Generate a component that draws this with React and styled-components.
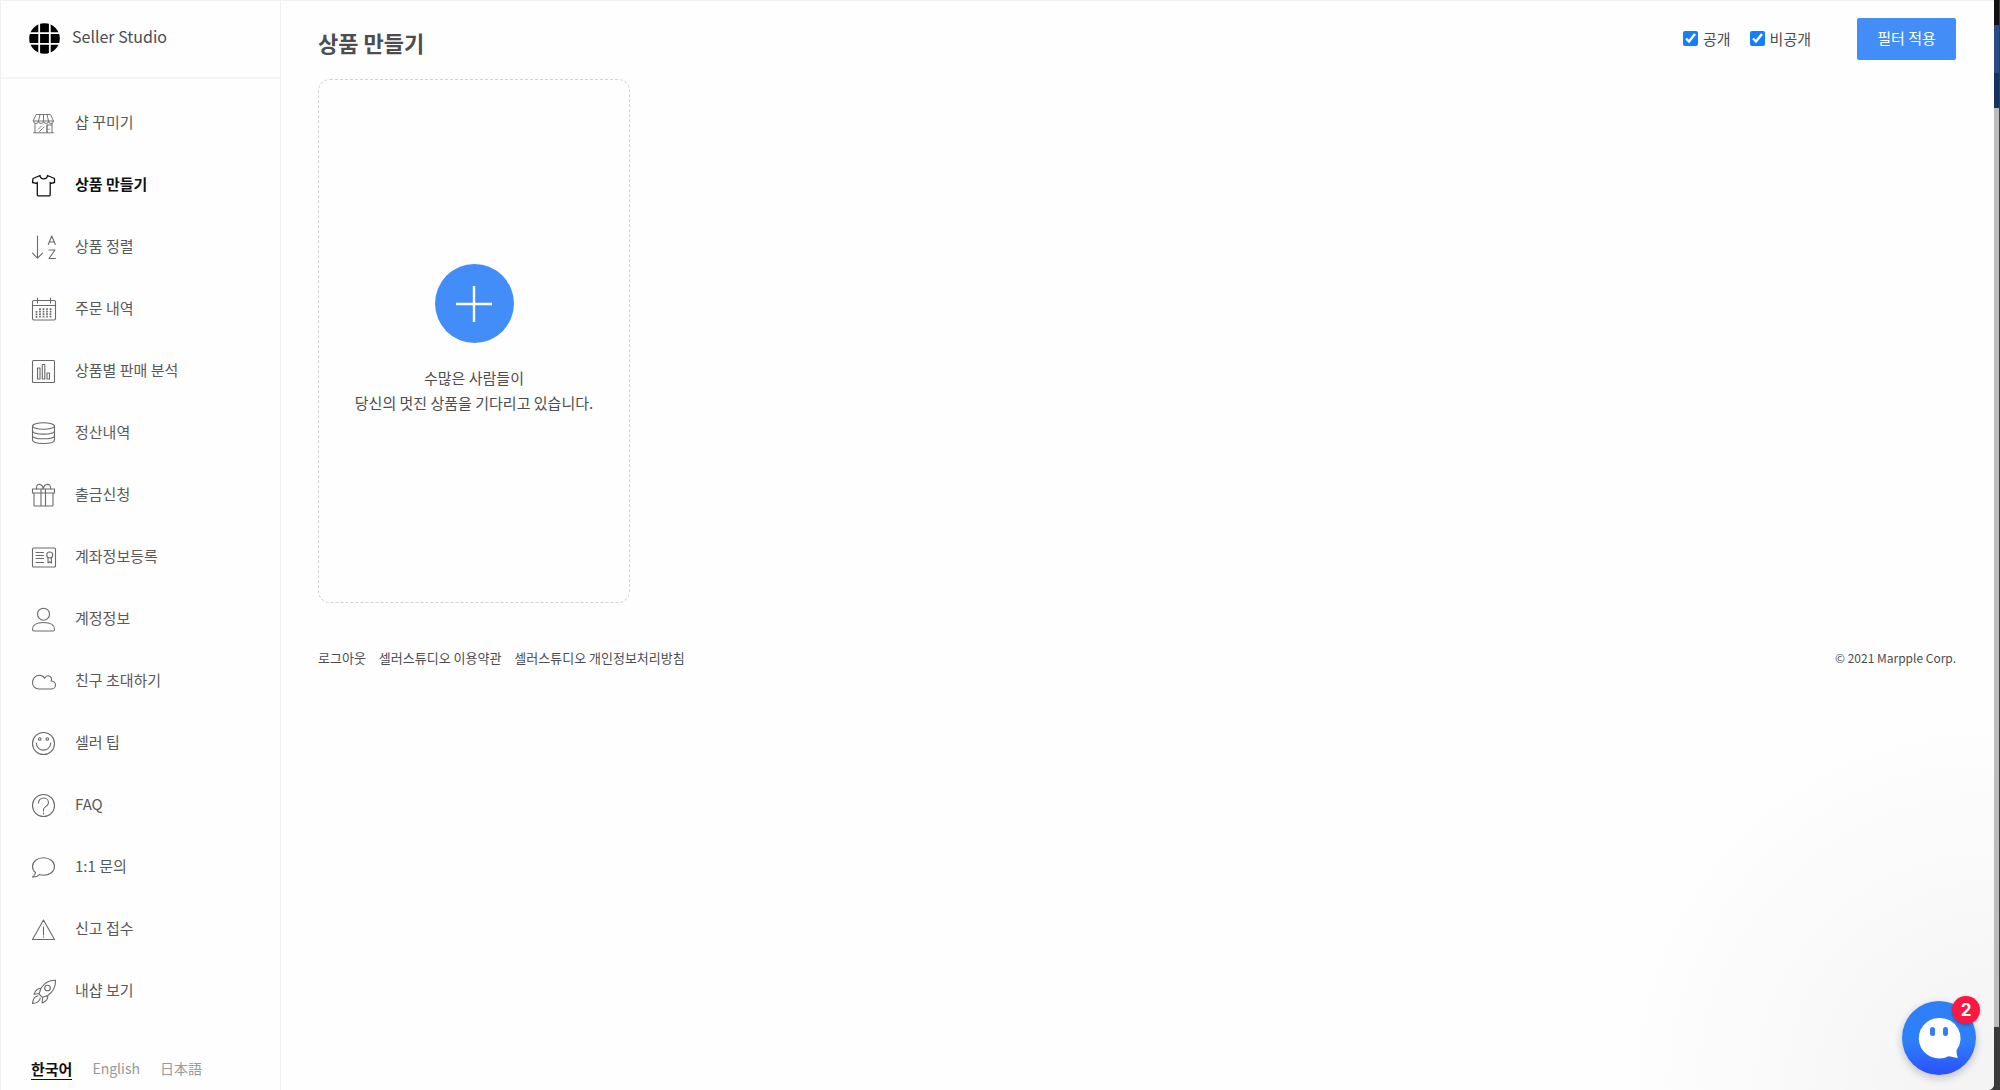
import React from 'react';
import styled, { createGlobalStyle, css } from 'styled-components';

const GlobalStyle = createGlobalStyle`
  * {
    box-sizing: border-box;
  }
  body {
    margin: 0;
    color: #4b4d52;
    background: #fff;
    font-family: 'Noto Sans CJK KR', 'Noto Sans CJK JP', sans-serif;
    font-size: 15px;
    line-height: 21px;
  }
  a {
    color: inherit;
    text-decoration: none;
  }
`;

const Desktop = styled.div`
  display: flex;
  min-height: 100vh;
  background: #3a3a3a;
`;

const Window = styled.div`
  position: relative;
  display: flex;
  flex: 1;
  background: #fefefe;
  border-top: 1px solid #f0f0f0;
  border-left: 1px solid #f0f0f0;
  border-bottom-right-radius: 6px;
`;

const Edge = styled.div`
  display: flex;
  flex-direction: column;
  width: 6px;
  border-right: 1px solid #3c3c3c;
`;

const EdgeBlock = styled.div`
  flex: ${props => props.$size} 0 0;
  background: ${props => props.$color};
`;

const Sidebar = styled.nav`
  display: flex;
  flex-direction: column;
  width: 280px;
  border-right: 1px solid #f0f0f0;
`;

const Brand = styled.a`
  display: flex;
  align-items: center;
  gap: 12px;
  height: 78px;
  padding: 0 28px 2px;
  border-bottom: 2px solid #f5f5f5;
  font-size: 16px;

  span {
    padding-bottom: 4px;
  }
`;

const Menu = styled.ul`
  list-style: none;
  margin: 0;
  padding: 13px 0 0;
`;

const MenuLink = styled.a`
  display: flex;
  align-items: center;
  gap: 19px;
  height: 62px;
  padding-left: 30px;
  color: #58595b;

  svg {
    width: 25px;
    height: 25px;
    fill: none;
    stroke: #6a6a6a;
    stroke-width: 1.1;
    stroke-linejoin: round;
    stroke-linecap: round;
  }

  span {
    padding-bottom: 3px;
  }

  ${props =>
    props.$active &&
    css`
      color: #111;
      font-weight: 700;

      svg {
        stroke: #111;
        stroke-width: 1.3;
      }
    `}
`;

const Languages = styled.div`
  display: flex;
  gap: 20px;
  padding: 36px 0 10px 30px;
`;

const Language = styled.a`
  color: #999;
  font-size: 14px;

  ${props =>
    props.$active &&
    css`
      color: #111;
      font-size: 15px;
      font-weight: 700;
      border-bottom: 1px solid #111;
    `}
`;

const Main = styled.main`
  flex: 1;
  padding: 17px 38px 0 37px;
`;

const Header = styled.header`
  display: flex;
  align-items: flex-start;
  justify-content: space-between;
`;

const Title = styled.h1`
  margin: 0;
  padding-top: 8px;
  font-size: 22px;
  line-height: 32px;
  font-weight: 700;
`;

const Filter = styled.form`
  display: flex;
  align-items: center;
`;

const Check = styled.label`
  display: flex;
  align-items: center;
  gap: 5px;
  margin-right: 19px;
  padding-bottom: 2px;

  input {
    width: 15px;
    height: 15px;
    margin: 0;
    accent-color: #157efb;
  }
`;

const Apply = styled.button`
  width: 99px;
  height: 42px;
  margin-left: 27px;
  padding: 0 0 4px;
  border: 0;
  border-radius: 2px;
  background: #438df8;
  color: #fff;
  font: inherit;
`;

const Card = styled.section`
  display: flex;
  flex-direction: column;
  align-items: center;
  justify-content: center;
  width: 312px;
  height: 524px;
  margin-top: 19px;
  padding-bottom: 3px;
  border: 1px dashed #d2d2d2;
  border-radius: 12px;
`;

const AddButton = styled.button`
  width: 79px;
  height: 79px;
  padding: 0;
  border: 0;
  border-radius: 50%;
  background: #438df8;

  svg {
    display: block;
    margin: auto;
  }
`;

const CardText = styled.p`
  margin: 22px 0 0;
  line-height: 25px;
  text-align: center;
`;

const Footer = styled.footer`
  display: flex;
  justify-content: space-between;
  padding-top: 44px;
  font-size: 13px;
`;

const FooterLinks = styled.div`
  display: flex;
  gap: 13px;
`;

const Copyright = styled.span`
  font-size: 12px;
`;

const Glow = styled.div`
  position: absolute;
  right: 0;
  bottom: 0;
  width: 400px;
  height: 400px;
  border-bottom-right-radius: 6px;
  background: radial-gradient(circle at bottom right, #f3f3f3 0, #fefefe 370px);
`;

const Chat = styled.button`
  position: absolute;
  right: 18px;
  bottom: 15px;
  width: 74px;
  height: 74px;
  padding: 0;
  border: 0;
  border-radius: 50%;
  background: linear-gradient(#2f80f7 0%, #2d7ff9 55%, #2b50fb 100%);
  box-shadow: 0 3px 8px rgba(0, 0, 0, 0.22);

  svg {
    display: block;
    width: 74px;
    height: 74px;
  }
`;

const Badge = styled.span`
  position: absolute;
  top: -5px;
  right: -4px;
  width: 28px;
  height: 28px;
  border-radius: 50%;
  background: #fb1843;
  box-shadow: 0 1px 3px rgba(0, 0, 0, 0.3);
  color: #fff;
  font: 700 17px/29px Inter, sans-serif;
`;

const icons = {
  shop: (
    <g strokeWidth="0.9">
      <path d="M5.500 3.500h14l3 6.500h-20zM2.500 10a2.500 2.500 0 0 0 5 0 2.500 2.500 0 0 0 5 0 2.500 2.500 0 0 0 5 0 2.500 2.500 0 0 0 5 0M7.500 10l1.500-6.500M12.500 10V3.500M17.500 10L16 3.500" />
      <path d="M4 12.500v9M21 12.500v9M2.500 21.800h20M16 21.500V14h5M16 14v7.500M18 18v.5" />
      <path d="M7.500 18l3-3M8.500 20.500l4.500-4.500" strokeDasharray="1.600 1" />
    </g>
  ),
  shirt: (
    <path d="M9 2.500 2 5.500l-.5 4 3.800.800 1-.800V22q0 .8.800.8h11.300q.8 0 .8-.8V9.500l1 .8 3.300-.800L23.500 5.500 16.500 2.500C16 7 9.500 7 9 2.500z" />
  ),
  sort: (
    <>
      <path d="M6.500 1v22M1.500 18.200l5 5 5-5" />
      <path d="M17.300 9.500l3.500-8.500 3.500 8.500M18.500 7h4.600M18 15h6l-6 8.500h6.500" />
    </>
  ),
  calendar: (
    <>
      <rect x="1.500" y="3.500" width="23" height="19.500" rx="1.500" />
      <path d="M1.500 8.500h23M6.500 1v5M19.500 1v5" />
      <path
        d="M5.500 14v7M9 11.300V21M12.500 11.300V21M16 11.300V21M19.500 11.300V21"
        strokeDasharray="1.800 0.700"
        strokeLinecap="butt"
        strokeWidth="1.700"
      />
    </>
  ),
  chart: (
    <>
      <rect x="1.500" y="1.500" width="22" height="22" rx="1" />
      <path d="M6.500 9H9v11H6.500zM11.300 5.500h2.500V20h-2.500zM16 14h2.500v6H16z" />
    </>
  ),
  coins: (
    <>
      <ellipse cx="12.500" cy="5" rx="11" ry="3.300" />
      <path d="M1.500 5v14c0 4.600 22 4.600 22 0V5M1.500 9.700c0 4.500 22 4.500 22 0M1.500 14.400c0 4.500 22 4.500 22 0" />
    </>
  ),
  gift: (
    <>
      <path d="M1.500 6h22v4h-22zM3 10v12q0 1 1 1h17q1 0 1-1V10M10 6v17M14.500 6v17" />
      <path d="M5.500 6C5 2.500 7 1 9 1.500c2 .5 3 2.500 3.300 4.500C12.600 4 13.500 2 15.800 1.500 18.200 1 20 2.500 19.500 6" />
    </>
  ),
  account: (
    <>
      <rect x="1.500" y="3" width="23" height="19" rx="1" />
      <path d="M5 7.500h7.500M5 10.500h7.500M5 13.500h7.500M5 17.500h7.500" />
      <circle cx="18.700" cy="10" r="3" />
      <path d="M17 12.500V18l1.700-1.300L20.400 18v-5.500" />
    </>
  ),
  user: (
    <>
      <circle cx="12.500" cy="7.200" r="6" />
      <path d="M1.500 22.500c0-4.500 4.500-7 11-7s11 2.500 11 7q0 1.500-1.500 1.500H3q-1.500 0-1.500-1.500z" />
    </>
  ),
  cloud: (
    <path d="M8 20c-4 0-6.500-2.800-6.500-6.500S4.300 6.300 8.300 6.300c2.500 0 4.300 1 5.300 2.900 1-1.800 3-3 5-2 1.800.8 2.300 2.800 1.500 4.800 2.500 0 4.400 1.800 4.400 4.200 0 2.200-2 3.800-4.500 3.800z" />
  ),
  smile: (
    <>
      <circle cx="12.500" cy="12.500" r="11" />
      <circle cx="8.700" cy="8" r="1.300" />
      <circle cx="16.300" cy="8" r="1.300" />
      <path d="M5.300 12c.2 9.500 14.200 9.500 14.400 0" />
    </>
  ),
  help: (
    <>
      <circle cx="12.500" cy="12.500" r="11" />
      <path d="M7.500 10c0-3 2.200-5 5-5s5 2 5 4.700c0 3.500-5 3.800-5 7V18M12.500 20v1" />
    </>
  ),
  talk: (
    <path d="M4.500 17.500C2.500 16 1.500 13.800 1.500 11.500c0-5 4.800-8.800 11-8.800s11 3.800 11 8.800-4.800 8.700-11 8.700c-1.500 0-2.900-.2-4.100-.6C6.500 21.500 4 22.200 1.500 22c2-1.200 2.800-2.800 3-4.500z" />
  ),
  warning: <path d="M12.500 3l11 19.500h-22zM12.500 10v8M12.500 19.800v.5" />,
  rocket: (
    <>
      <path d="M24.500 1.300c-7-.2-11.500 3-14.500 8L8 15l3.500 3.300 5.300-1.800c5-3.500 8-8 7.700-15.200zM10 9.300c-4 .2-6 3-7 6l5-.8M16.800 16.500c.2 4-2.600 6.500-5.600 7.500l.5-5.500" />
      <circle cx="16.500" cy="9" r="2.800" />
      <path d="M7 17c-3 0-5 3-5.500 7.500C6 24 9 22.500 9.200 19" />
    </>
  ),
};

const menu = [
  ['shop', '샵 꾸미기'],
  ['shirt', '상품 만들기'],
  ['sort', '상품 정렬'],
  ['calendar', '주문 내역'],
  ['chart', '상품별 판매 분석'],
  ['coins', '정산내역'],
  ['gift', '출금신청'],
  ['account', '계좌정보등록'],
  ['user', '계정정보'],
  ['cloud', '친구 초대하기'],
  ['smile', '셀러 팁'],
  ['help', 'FAQ'],
  ['talk', '1:1 문의'],
  ['warning', '신고 접수'],
  ['rocket', '내샵 보기'],
];

function Logo() {
  return (
    <svg width="31" height="31" viewBox="0 0 31 31">
      <circle cx="15.500" cy="15.500" r="15.300" fill="#000" />
      <path d="M10.200 0v31M20.800 0v31M0 10.200h31M0 20.800h31" stroke="#fff" strokeWidth="1.800" />
    </svg>
  );
}

function ChatWidget() {
  return (
    <Chat type="button" aria-label="2">
      <svg viewBox="0 0 74 74">
        <path
          d="M37 17a20.300 20.300 0 1 0 9.500 38.300c2.500.2 5.500 1.200 9.300 1.700-.8-2.500-1.400-5-1.300-7.500A20.300 20.300 0 0 0 37 17z"
          fill="#fff"
        />
        <rect x="28" y="26" width="5" height="9" rx="2.500" fill="#2f80f7" />
        <rect x="41" y="26" width="5" height="9" rx="2.500" fill="#2f80f7" />
      </svg>
      <Badge>2</Badge>
    </Chat>
  );
}

export default function App() {
  return (
    <Desktop>
      <GlobalStyle />
      <Window>
        <Glow />
        <Sidebar>
          <Brand href="#">
            <Logo />
            <span>Seller Studio</span>
          </Brand>
          <Menu>
            {menu.map(([icon, label]) => (
              <li key={icon}>
                <MenuLink href="#" $active={icon === 'shirt'}>
                  <svg viewBox="0 0 25 25" overflow="visible">{icons[icon]}</svg>
                  <span>{label}</span>
                </MenuLink>
              </li>
            ))}
          </Menu>
          <Languages>
            <Language href="#" $active>한국어</Language>
            <Language href="#">English</Language>
            <Language href="#" lang="ja">日本語</Language>
          </Languages>
        </Sidebar>
        <Main>
          <Header>
            <Title>상품 만들기</Title>
            <Filter onSubmit={e => e.preventDefault()}>
              <Check>
                <input type="checkbox" defaultChecked />
                공개
              </Check>
              <Check>
                <input type="checkbox" defaultChecked />
                비공개
              </Check>
              <Apply type="submit">필터 적용</Apply>
            </Filter>
          </Header>
          <Card>
            <AddButton type="button" aria-label="상품 만들기">
              <svg width="36" height="36" viewBox="0 0 36 36">
                <path d="M18 0v36M0 18h36" stroke="#fff" strokeWidth="2.400" />
              </svg>
            </AddButton>
            <CardText>
              수많은 사람들이
              <br />
              당신의 멋진 상품을 기다리고 있습니다.
            </CardText>
          </Card>
          <Footer>
            <FooterLinks>
              <a href="#">로그아웃</a>
              <a href="#">셀러스튜디오 이용약관</a>
              <a href="#">셀러스튜디오 개인정보처리방침</a>
            </FooterLinks>
            <Copyright>© 2021 Marpple Corp.</Copyright>
          </Footer>
        </Main>
        <ChatWidget />
      </Window>
      <Edge>
        <EdgeBlock $size={25} $color="#111" />
        <EdgeBlock $size={48} $color="#2a4b85" />
        <EdgeBlock $size={35} $color="#14335f" />
        <EdgeBlock $size={919} $color="#bcbcbc" />
        <EdgeBlock $size={63} $color="#3a3a3a" />
      </Edge>
    </Desktop>
  );
}
